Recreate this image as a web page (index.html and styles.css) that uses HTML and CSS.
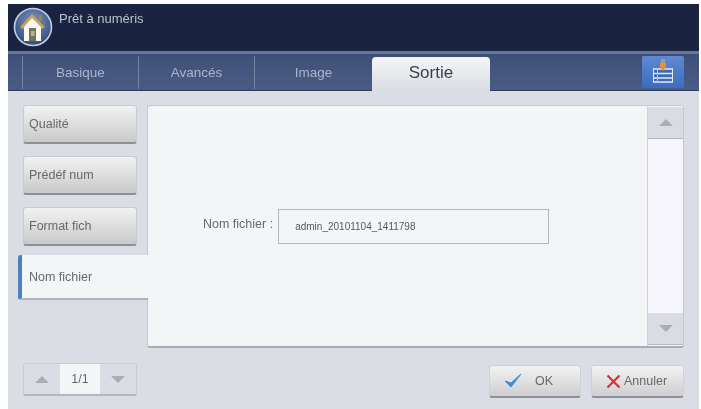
FILE: index.html
```html
<!DOCTYPE html>
<html lang="fr">
<head>
    <meta charset="UTF-8">
    <title>Prêt à numéris</title>
    <link rel="stylesheet" href="styles.css">
</head>
<body>
    <div class="app">
        <header class="header">
            <svg class="home" width="40" height="40" viewBox="0 0 40 40">
                <defs>
                    <radialGradient id="disc" cx="50%" cy="35%" r="65%">
                        <stop offset="0" stop-color="#7d95c0"/>
                        <stop offset="1" stop-color="#2f4a80"/>
                    </radialGradient>
                </defs>
                <circle cx="20" cy="20" r="18.5" fill="url(#disc)" stroke="#c3cee2" stroke-width="1.6"/>
                <rect x="26" y="8" width="3" height="6" fill="#a8843c"/>
                <path d="M7 20 L19 7 L32 20 L29 22 L19 11 L10 22 Z" fill="#c9a358"/>
                <path d="M11 20 L19 11 L28 20 V34 H11 Z" fill="#fbf8ef"/>
                <rect x="16" y="21" width="7" height="13" fill="#6f7660"/>
                <rect x="18" y="24" width="3.5" height="5" fill="#b9b38e"/>
            </svg>
            <span class="status">Prêt à numéris</span>
        </header>

        <nav class="tabbar">
            <a class="tab">Basique</a>
            <a class="tab">Avancés</a>
            <a class="tab tab-last">Image</a>
            <a class="tab tab-active">Sortie</a>
            <button class="job-btn">
                <svg width="24" height="26" viewBox="0 0 24 26">
                    <rect x="10" y="0" width="4" height="5" fill="#a99a8c"/>
                    <rect x="2" y="9.5" width="20" height="14" fill="#3f68b0"/>
                    <path d="M2 10 H22 M2 14.5 H22 M2 19 H22 M2 23 H22" stroke="#e2eaf6" stroke-width="1.4"/>
                    <path d="M2.5 9.5 V23.5 M21.5 9.5 V23.5" stroke="#e2eaf6"/>
                    <path d="M6.5 10 V23" stroke="#a9c0e2"/>
                    <path d="M9 4 H15 V8 L12 12 L9 8 Z" fill="#ea922a"/>
                </svg>
            </button>
        </nav>

        <main class="content">
            <div class="side">
                <button class="side-btn">Qualité</button>
                <button class="side-btn">Prédéf num</button>
                <button class="side-btn">Format fich</button>
                <div class="side-tab">Nom fichier</div>
            </div>
            <section class="panel">
                <div class="panel-body">
                    <span class="field-label">Nom fichier :</span>
                    <div class="field">admin_20101104_1411798</div>
                </div>
                <div class="scroll">
                    <button class="scroll-btn"><span class="arrow-up"></span></button>
                    <button class="scroll-btn"><span class="arrow-down"></span></button>
                </div>
            </section>
        </main>

        <footer class="footer">
            <div class="pager">
                <span class="pager-btn"><span class="arrow-up"></span></span>
                <span class="pager-num">1/1</span>
                <span class="pager-btn"><span class="arrow-down"></span></span>
            </div>
            <div class="actions">
                <button class="action action-ok">
                    <svg width="20" height="18" viewBox="0 0 20 18">
                        <path d="M2 9 L8 15 L18 2 L8 11 Z" fill="#3f8fd6" stroke="#3f8fd6" stroke-width="1"/>
                    </svg>
                    <span>OK</span>
                </button>
                <button class="action action-cancel">
                    <svg width="15" height="15" viewBox="0 0 15 15">
                        <path d="M1.5 1.5 L13.5 13.5 M13.5 1.5 L1.5 13.5" stroke="#d8303c" stroke-width="2.2"/>
                    </svg>
                    <span>Annuler</span>
                </button>
            </div>
        </footer>
    </div>
</body>
</html>
```
FILE: styles.css
```css
* {
    margin: 0;
    padding: 0;
    box-sizing: border-box;
    font-family: "Liberation Sans", Arial, sans-serif;
}
html, body {
    height: 100%;
    background-color: #fff;
}
body {
    padding: 4px 2px 0 8px;
    overflow: hidden;
}
.app {
    height: 100%;
    display: flex;
    flex-direction: column;
    background-color: #dadde4;
    filter: blur(0.4px);
}
button {
    border: none;
    background: none;
}

/* header */
.header {
    height: 47px;
    flex: none;
    display: flex;
    align-items: flex-start;
    background-color: #1a2440;
    padding: 3px 0 0 5px;
}
.status {
    margin: 4px 0 0 6px;
    color: #b9c0ce;
    font-size: 13px;
}

/* tabs */
.tabbar {
    height: 40px;
    flex: none;
    display: flex;
    padding: 5px 15px 0 14px;
    border-top: 3px solid #66759a;
    background-image: linear-gradient(#3f5078, #4a5c85);
    border-bottom: 1px solid #2c3a5c;
}
.tab {
    width: 116px;
    height: 33px;
    margin-top: -3px;
    display: flex;
    align-items: center;
    justify-content: center;
    color: #aab4ca;
    font-size: 13.5px;
    border-left: 1px solid #76849f;
}
.tab-last {
    width: 118px;
}
.tab-active {
    width: 118px;
    height: 34px;
    margin-top: -2px;
    padding-bottom: 2px;
    color: #3c3f46;
    font-size: 17px;
    border-left: none;
    border-radius: 4px 4px 0 0;
    background-image: linear-gradient(#f4f5f7, #dadde4);
}
.job-btn {
    width: 42px;
    height: 32px;
    margin-left: auto;
    margin-top: -3px;
    display: flex;
    align-items: center;
    justify-content: center;
    background-image: linear-gradient(#5f8ad0, #3d6cc0);
    border-radius: 2px;
}

/* content */
.content {
    height: 243px;
    flex: none;
    margin-top: 14px;
    display: flex;
    padding-right: 15px;
}
.side {
    width: 139px;
    flex: none;
    display: flex;
    flex-direction: column;
    align-items: flex-start;
    gap: 12px;
}
.side-btn {
    width: 114px;
    height: 39px;
    margin-left: 15px;
    padding-left: 5px;
    text-align: left;
    color: #66696f;
    font-size: 12.5px;
    border-radius: 3px;
    border: 1px solid #c9cbd0;
    border-bottom: 2px solid #8e9095;
    background-image: linear-gradient(#f2f2f2, #c9c9ca);
}
.side-tab {
    width: 130px;
    height: 45px;
    margin-left: 10px;
    margin-top: -3px;
    padding-left: 7px;
    display: flex;
    align-items: center;
    color: #66696f;
    font-size: 12.5px;
    background-color: #f4f5f6;
    border-left: 4px solid #4f7fbc;
    border-bottom: 2px solid #b0b3b8;
    border-radius: 3px 0 0 3px;
    z-index: 1;
}
.panel {
    flex: 1;
    display: flex;
    background-color: #f4f5f6;
    border-radius: 3px;
    border-top: 1px solid #c6c9cf;
    border-left: 1px solid #c6c9cf;
    border-bottom: 2px solid #a9acb1;
}
.panel-body {
    flex: 1;
    display: flex;
    align-items: center;
    padding-left: 55px;
}
.field-label {
    color: #66696f;
    font-size: 12.5px;
    margin: 0 5px 5px 0;
}
.field {
    width: 271px;
    height: 35px;
    display: flex;
    align-items: center;
    padding-left: 16px;
    color: #55585e;
    font-size: 10px;
    border: 1px solid #b4b7bb;
}
.scroll {
    width: 37px;
    flex: none;
    display: flex;
    flex-direction: column;
    justify-content: space-between;
    padding: 1px 0 1px;
    background-color: #f5f5fb;
    border-left: 1px solid #cfd2d8;
    border-right: 1px solid #c6c9cf;
}
.scroll-btn {
    height: 32px;
    display: flex;
    align-items: center;
    justify-content: center;
    background-color: #d9dde3;
    border-bottom: 1px solid #b5b8be;
}
.arrow-up {
    width: 0;
    height: 0;
    border-left: 7px solid transparent;
    border-right: 7px solid transparent;
    border-bottom: 7px solid #a9adb5;
}
.arrow-down {
    width: 0;
    height: 0;
    border-left: 7px solid transparent;
    border-right: 7px solid transparent;
    border-top: 7px solid #a9adb5;
}

/* footer */
.footer {
    display: flex;
    justify-content: space-between;
    padding: 15px 15px 0 15px;
}
.pager {
    width: 114px;
    height: 33px;
    display: flex;
    border: 1px solid #c9ccd2;
    border-bottom: 2px solid #b4b7bd;
    border-radius: 2px;
}
.pager-btn {
    flex: 1;
    display: flex;
    align-items: center;
    justify-content: center;
}
.pager-num {
    width: 40px;
    display: flex;
    align-items: center;
    justify-content: center;
    color: #66696f;
    font-size: 12.5px;
    background-color: #f4f5f6;
}
.actions {
    display: flex;
    gap: 10px;
    margin-top: 2px;
}
.action {
    height: 33px;
    display: flex;
    align-items: center;
    color: #66696f;
    font-size: 12.5px;
    border-radius: 3px;
    border: 1px solid #d0d2d6;
    border-bottom: 2px solid #8e9095;
    background-image: linear-gradient(#f2f2f2, #cfcfd1);
}
.action-ok {
    width: 92px;
    padding-left: 13px;
    gap: 12px;
}
.action-cancel {
    width: 93px;
    padding-left: 14px;
    gap: 3px;
}
```
